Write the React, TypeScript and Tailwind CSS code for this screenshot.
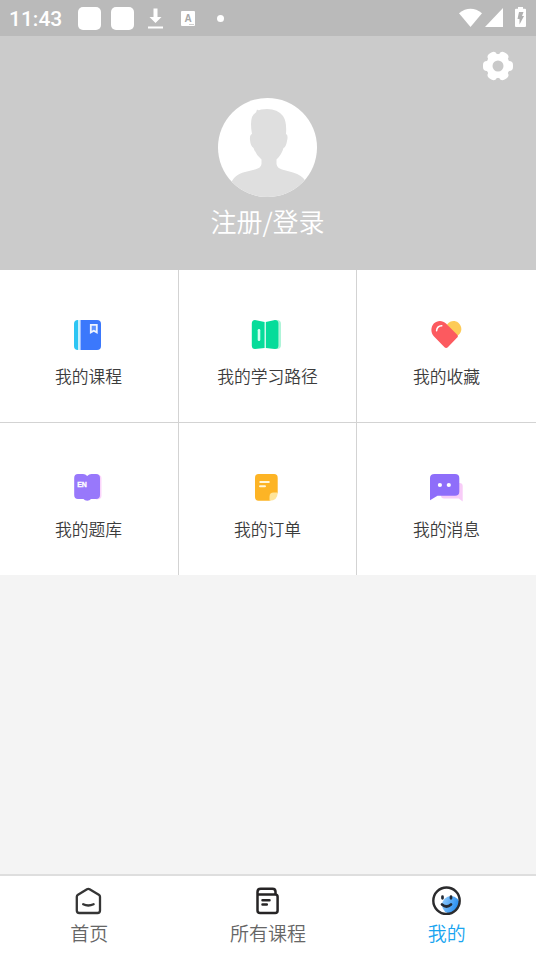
import type { ReactNode } from 'react';

interface MenuItem {
  label: string;
  icon: ReactNode;
}

const menuItems: MenuItem[] = [
  {
    label: '我的课程',
    icon: (
      <>
        <path d="M8.5 3v30H8a4 4 0 0 1-4-4V7a4 4 0 0 1 4-4z" fill="#2cc5f3" />
        <path d="M8 3h2v30H8z" fill="#c9f0fd" />
        <path d="M10.5 3H27a4 4 0 0 1 4 4v22a4 4 0 0 1-4 4H10.5z" fill="#3b78fc" />
        <path d="M20.8 7.8h6v7.6l-3-1.6-3 1.6z" fill="#5f93ff" stroke="#edf3ff" strokeWidth="1.8" />
      </>
    ),
  },
  {
    label: '我的学习路径',
    icon: (
      <>
        <path d="M20 5l8-2q4 0 4 4v21q0 4-4 4l-8-1z" fill="#aef4d8" />
        <path d="M6 3l9.6 2v26L6 32q-3.2 0-3.2-3.5v-22Q2.8 3 6 3z" fill="#06dc9a" />
        <path d="M16.8 5L26 3q3.4 0 3.4 3.5v22q0 3.5-3.4 3.5l-9.2-1z" fill="#06dc9a" />
        <rect x="8.7" y="12" width="2.6" height="12" rx="1.3" fill="#d3fff0" />
      </>
    ),
  },
  {
    label: '我的收藏',
    icon: (
      <>
        <path d="M19 7.5c3-4 8-4.5 11-2s5 7 1.5 11.5L27 21z" fill="#fdcb58" />
        <path
          d="M5.8 6.5c3.5-3.5 9-3.3 12.2 0l11.2 11.2c.9.9.9 2 0 2.9l-9.4 9.6c-1 1-2.3 1-3.3 0L5.8 19.2c-3.2-3.5-3.2-9.2 0-12.7z"
          fill="#fc5a5f"
        />
        <path d="M8.6 13.7c.2-3 1.9-4.7 5.2-4.9" fill="none" stroke="#fff" strokeWidth="1.5" strokeLinecap="round" />
      </>
    ),
  },
  {
    label: '我的题库',
    icon: (
      <>
        <path d="M26 4.5q5.5 0 5.5 3.5v18q0 3.5-5.5 3.5z" fill="#fbd5fb" />
        <path
          d="M8 4h5q2.5 0 4.2 2Q19 4 21.5 4H26q4 0 4 4v17q0 4-4 4h-5q-1.3 1.7-3.8 1.7T13.500 29H8q-3.800 0-3.800-4V8Q4.200 4 8 4z"
          fill="#9878fb"
        />
        <text
          x="7.2"
          y="16.8"
          fill="#fff"
          stroke="#fff"
          strokeWidth=".3"
          fontSize="7"
          fontWeight="700"
          fontFamily="Liberation Sans, sans-serif"
        >
          EN
        </text>
      </>
    ),
  },
  {
    label: '我的订单',
    icon: (
      <>
        <path d="M9.5 4H25q3.700 0 3.700 3.700V23L21 30.700H9.500Q6 30.700 6 27V7.700Q6 4 9.500 4z" fill="#fdb425" />
        <path d="M28.7 22.5q0 8.200-8.200 8.200v-4q0-4.200 4.200-4.200z" fill="#ffe59a" />
        <path d="M11.3 12h8.500M11 16.200h5" stroke="#fff6dc" strokeWidth="2" strokeLinecap="round" />
      </>
    ),
  },
  {
    label: '我的消息',
    icon: (
      <>
        <path d="M16 13h15.500q3.200 0 3.200 3v15.500l-4-3H16q-3 0-3-3z" fill="#f8ccf8" />
        <path d="M6.5 4H27q4.300 0 4.300 4v13.700q0 4-4.300 4H9.500L2 30.200V8q0-4 4.500-4z" fill="#8e6efa" />
        <circle cx="11.9" cy="15" r="2.1" fill="#fff" />
        <circle cx="20.8" cy="15" r="2.1" fill="#fff" />
      </>
    ),
  },
];

const tabs = [
  {
    label: '首页',
    active: false,
    icon: (
      <g fill="none" stroke="#353535" strokeWidth="2.3" strokeLinejoin="round" strokeLinecap="round">
        <path d="M14 4.300q1.300-.8 2.600 0l9.200 5.500q1.200.8 1.200 2V25.500q0 2.500-2.500 2.500H6.300q-2.500 0-2.500-2.500V11.800q0-1.200 1.200-2z" />
        <path d="M10.2 19.300q5 2.400 10.400 0" />
      </g>
    ),
  },
  {
    label: '所有课程',
    active: false,
    icon: (
      <g fill="none" stroke="#262425" strokeWidth="2.5" strokeLinejoin="round" strokeLinecap="round">
        <path d="M5.500 9.500h17.700q2.400 0 2.400 2.300v13.700q0 2.500-2.400 2.500H8.100q-2.600 0-2.600-2.500V7q0-3.200 3.200-3.200h11.800q3 0 3 3v2.400" />
        <path d="M10.500 15.300h7M10.500 19.500h4.300" />
      </g>
    ),
  },
  {
    label: '我的',
    active: true,
    icon: (
      <>
        <defs>
          <linearGradient id="cheek" x1="0" y1="0.3" x2="1" y2="0.7">
            <stop offset="0" stopColor="#8cc8fc" />
            <stop offset="1" stopColor="#1684ee" />
          </linearGradient>
          <clipPath id="face">
            <circle cx="15.5" cy="15.7" r="13" />
          </clipPath>
        </defs>
        <circle cx="20" cy="20" r="9" fill="url(#cheek)" clipPath="url(#face)" />
        <circle cx="15.5" cy="15.7" r="13.2" fill="none" stroke="#2b2b2d" strokeWidth="2.4" />
        <path
          d="M11.500 11.700v1.600M20 11.700v1.600M11 19.500q4.500 4 9 0"
          fill="none"
          stroke="#222a35"
          strokeWidth="2.7"
          strokeLinecap="round"
        />
      </>
    ),
  },
];

function StatusBar() {
  return (
    <div className="flex h-9 shrink-0 items-center bg-[#bababa] pr-[10px] pl-[9px] text-white">
      <span className="w-[69px] pt-[2px] font-[Roboto,sans-serif] text-[21px] leading-none font-medium">11:43</span>
      <span className="mr-[10px] size-[23px] rounded-[5px] bg-white" />
      <span className="mr-[14px] size-[23px] rounded-[5px] bg-white" />
      <svg className="mr-[18px] h-[21px] w-[15px]" viewBox="0 0 15 21" fill="currentColor">
        <path d="M5.500 0.500h4v8.500h4l-6 6-6-6h4zM0 18.500h15v2H0z" />
      </svg>
      <svg className="mr-[22px] h-[15px] w-[14px]" viewBox="0 0 14 15">
        <rect width="14" height="15" rx="1" fill="#fff" />
        <text
          x="7"
          y="11"
          textAnchor="middle"
          fill="#a8a8a8"
          fontSize="10"
          fontWeight="700"
          fontFamily="Liberation Sans, sans-serif"
        >
          A
        </text>
        <path d="M8 13.500h5" stroke="#bababa" strokeWidth=".7" />
      </svg>
      <span className="size-[7px] rounded-full bg-white" />
      <div className="ml-auto flex items-center pb-[2px]">
        <svg className="mr-[3px] h-[19px] w-[23px]" viewBox="0 0 23 19" fill="currentColor">
          <path d="M0 5.200Q11.500-3.500 23 5.200L11.500 19z" />
        </svg>
        <svg className="mr-[12px] h-[19px] w-[18px]" viewBox="0 0 18 19" fill="currentColor">
          <path d="M18 0v19H0z" />
        </svg>
        <svg className="h-5 w-[11px]" viewBox="0 0 11 20">
          <path d="M3 0h5v1.800h2q1 0 1 1V19q0 1-1 1H1q-1 0-1-1V2.800q0-1 1-1h2z" fill="#fff" />
          <path d="M4 5h4.500L7 9h2l-4.500 8.500V12h-2z" fill="#b0b0b0" />
        </svg>
      </div>
    </div>
  );
}

function GearIcon() {
  return (
    <svg className="size-[30px]" viewBox="-15 -15 30 30">
      <g fill="#fff">
        <circle r="12" />
        <rect x="-15" y="-5" width="30" height="10" rx="4" />
        <rect x="-15" y="-5" width="30" height="10" rx="4" transform="rotate(60)" />
        <rect x="-15" y="-5" width="30" height="10" rx="4" transform="rotate(120)" />
      </g>
      <circle r="5.5" fill="#c9c9c9" />
    </svg>
  );
}

function Avatar() {
  return (
    <svg className="size-[99px]" viewBox="0 0 99 99">
      <defs>
        <clipPath id="avatar">
          <circle cx="49.5" cy="49.5" r="49.5" />
        </clipPath>
      </defs>
      <g clipPath="url(#avatar)">
        <rect width="99" height="99" fill="#fff" />
        <path
          d="M39 11.500Q40.500 13 43 11.500Q58 9 65 18Q69 24 68 36Q70.500 37 69 43Q68 49 65.500 50Q63.500 57 58.500 61.500V66Q59 70 64 71.500L75 74.500Q84 77 87.500 83V99H14V83Q17 77 25 74.500L37 71.500Q43 70 43.500 66V61.500Q38 57 35.500 50Q32.500 48 32 42Q31.500 37 34 36Q32 25 34 19Q35.500 15.500 38 14.500Z"
          fill="#dfdfdf"
        />
      </g>
    </svg>
  );
}

export default function App() {
  return (
    <div className="flex h-[954px] w-[536px] flex-col overflow-hidden bg-[#f4f4f4] font-['Noto_Sans_CJK_SC',sans-serif] font-[350]">
      <StatusBar />

      {/* Profile header */}
      <header className="flex h-[234px] shrink-0 flex-col items-center bg-[#cbcbcb] pt-[15px]">
        <button className="mr-[23px] self-end" aria-label="设置">
          <GearIcon />
        </button>
        <div className="mt-[17px] pr-[2px]">
          <Avatar />
        </div>
        <span className="mt-[8px] pr-px text-[26px] leading-8 text-white">注册/登录</span>
      </header>

      {/* Menu */}
      <div className="grid shrink-0 grid-cols-[178px_177px_179px] grid-rows-[152px_152px] gap-px bg-[#d3d3d3]">
        {menuItems.map((item, i) => (
          <button
            key={item.label}
            className={`flex flex-col items-center bg-white pt-[47px] ${i % 3 === 0 ? 'pr-px' : ''}`}
          >
            <svg className="h-9 w-[37px]" viewBox="0 0 37 36">
              {item.icon}
            </svg>
            <span className="mt-[11px] text-[16.8px] leading-6 text-[#3c3c3c]">{item.label}</span>
          </button>
        ))}
      </div>

      {/* Bottom tabs */}
      <nav className="mt-auto grid h-20 shrink-0 grid-cols-3 border-t-2 border-[#dedede] bg-white">
        {tabs.map((tab) => (
          <button key={tab.label} className="flex flex-col items-center pt-[9px]">
            <svg className="size-8" viewBox="0 0 32 32">
              {tab.icon}
            </svg>
            <span className={`mt-[2px] text-[19px] leading-7 ${tab.active ? 'text-[#1aa5f0]' : 'text-[#666]'}`}>
              {tab.label}
            </span>
          </button>
        ))}
      </nav>
    </div>
  );
}
